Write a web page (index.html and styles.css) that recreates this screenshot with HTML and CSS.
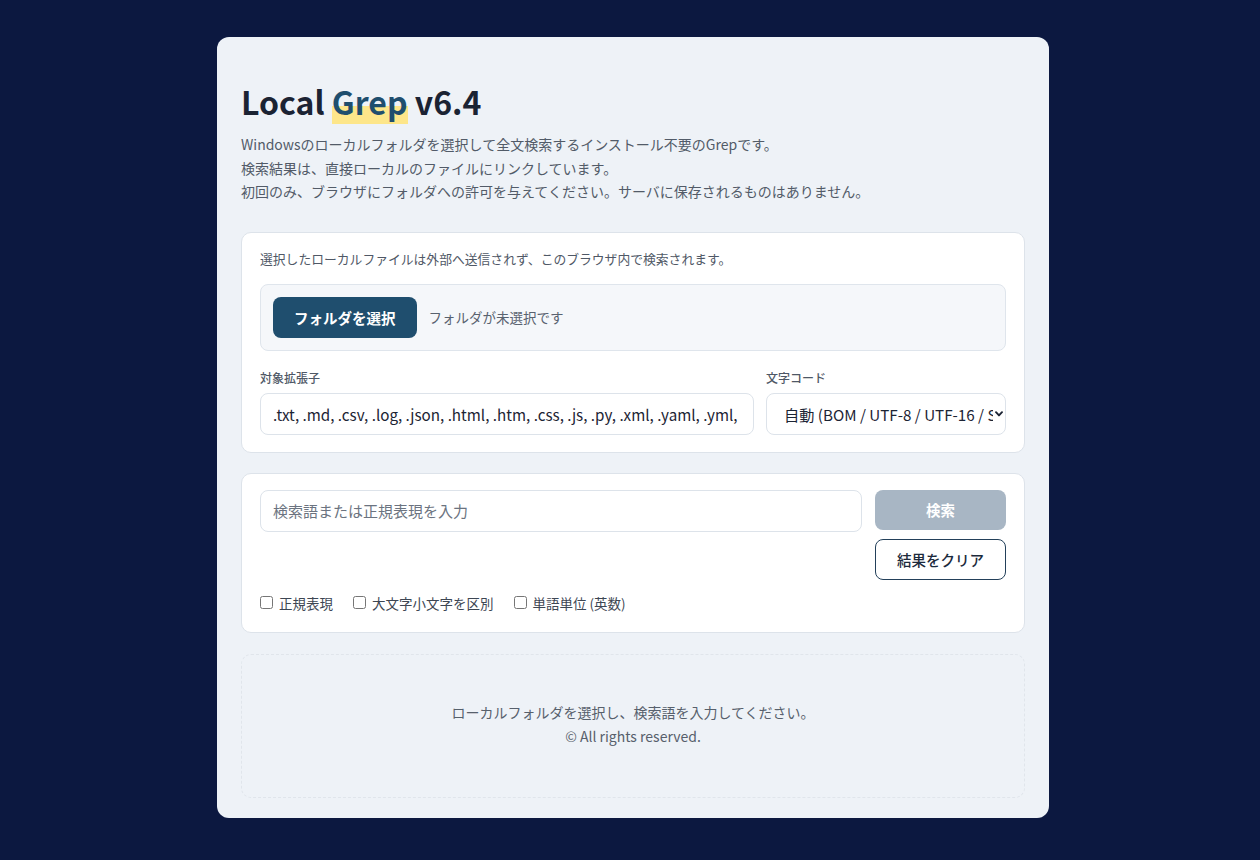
FILE: index.html
```html
<!DOCTYPE html>
<html lang="ja">
<head>
<meta charset="utf-8">
<title>Local Grep v6.4</title>
<link rel="stylesheet" href="styles.css">
</head>
<body>
<main class="card">
  <header class="intro">
    <h1 class="title">Local <span class="mark">Grep</span> v6.4</h1>
    <p class="lead">Windowsのローカルフォルダを選択して全文検索するインストール不要のGrepです。<br>検索結果は、直接ローカルのファイルにリンクしています。<br>初回のみ、ブラウザにフォルダへの許可を与えてください。サーバに保存されるものはありません。</p>
  </header>

  <section class="panel">
    <p class="note">選択したローカルファイルは外部へ送信されず、このブラウザ内で検索されます。</p>
    <div class="folder-box">
      <button class="btn-primary" type="button">フォルダを選択</button>
      <span class="folder-status">フォルダが未選択です</span>
    </div>
    <div class="field-row">
      <label class="field">
        <span class="field-label">対象拡張子</span>
        <input class="text-input" type="text" value=".txt, .md, .csv, .log, .json, .html, .htm, .css, .js, .py, .xml, .yaml, .yml, .ini, .bat">
      </label>
      <label class="field">
        <span class="field-label">文字コード</span>
        <span class="select-wrap">
          <select class="select-input">
            <option>自動 (BOM / UTF-8 / UTF-16 / Shift_JIS)</option>
          </select>
          <svg class="select-arrow" width="8" height="6" viewBox="0 0 8 6" aria-hidden="true"><path d="M1 1.2 L4 4.4 L7 1.2" fill="none" stroke="#1c2434" stroke-width="1.9" stroke-linecap="round" stroke-linejoin="round"/></svg>
        </span>
      </label>
    </div>
  </section>

  <section class="panel search-panel">
    <div class="search-row">
      <input class="text-input search-input" type="text" placeholder="検索語または正規表現を入力">
      <div class="search-buttons">
        <button class="btn-search" type="button" disabled>検索</button>
        <button class="btn-outline" type="button">結果をクリア</button>
      </div>
    </div>
    <div class="options">
      <label class="opt"><input type="checkbox"> 正規表現</label>
      <label class="opt"><input type="checkbox"> 大文字小文字を区別</label>
      <label class="opt"><input type="checkbox"> 単語単位 (英数)</label>
    </div>
  </section>

  <section class="results">
    <p class="results-msg">ローカルフォルダを選択し、検索語を入力してください。</p>
    <p class="results-msg">© All rights reserved.</p>
  </section>
</main>
</body>
</html>
```

FILE: styles.css
```css
* { box-sizing: border-box; }

html, body {
  margin: 0;
  padding: 0;
}

body {
  background: #0c1840;
  font-family: "Noto Sans CJK JP", "Noto Sans", sans-serif;
  color: #1c2434;
  padding: 37px 0 42px 6px;
}

.card {
  width: 832px;
  margin: 0 auto;
  background: #eef2f7;
  border-radius: 12px;
  padding: 45px 24px 20px;
}

.title {
  margin: 0;
  font-size: 32px;
  line-height: 38px;
  font-weight: 700;
  color: #1b2333;
  letter-spacing: 0;
}

.mark {
  color: #1f4e6e;
  background: linear-gradient(transparent 60%, #fde68a 60%);
}

.lead {
  margin: 13px 0 0;
  font-size: 14px;
  line-height: 23.5px;
  color: #525b68;
}

.panel {
  margin-top: 28px;
  background: #ffffff;
  border: 1px solid #dde3ea;
  border-radius: 10px;
  padding: 16px 18px 17px;
}

.note {
  margin: 0;
  font-size: 12.8px;
  line-height: 20px;
  color: #4f5866;
}

.folder-box {
  margin-top: 15px;
  display: flex;
  align-items: center;
  gap: 12px;
  background: #f5f7fa;
  border: 1px solid #dfe5ec;
  border-radius: 8px;
  padding: 12px;
}

.btn-primary {
  font-family: inherit;
  font-size: 14.5px;
  font-weight: 700;
  color: #ffffff;
  background: #1f4e6e;
  border: none;
  border-radius: 8px;
  height: 41px;
  padding: 0 21px;
}

.folder-status {
  font-size: 13.5px;
  color: #59626f;
}

.field-row {
  margin-top: 18px;
  display: grid;
  grid-template-columns: 1fr 240px;
  gap: 12px;
}

.field {
  display: flex;
  flex-direction: column;
  gap: 6px;
}

.field-label {
  font-size: 12px;
  line-height: 18px;
  font-weight: 500;
  color: #4f5866;
}

.text-input {
  font-family: inherit;
  font-size: 15.2px;
  color: #1c2434;
  height: 42px;
  border: 1px solid #dde3ea;
  border-radius: 8px;
  background: #ffffff;
  padding: 0 12px;
  width: 100%;
  outline: none;
}

.text-input::placeholder {
  color: #6b7380;
}

.select-wrap {
  position: relative;
  display: block;
}

.select-input {
  appearance: none;
  -webkit-appearance: none;
  display: block;
  font-family: inherit;
  font-size: 15.2px;
  color: #1c2434;
  height: 42px;
  border: 1px solid #dde3ea;
  border-radius: 8px;
  background: #ffffff;
  padding: 0 12px 0 17px;
  width: 100%;
  outline: none;
}

.select-arrow {
  position: absolute;
  right: 3px;
  top: 18px;
  pointer-events: none;
}

.search-panel {
  margin-top: 20px;
  padding: 16px 18px 19px;
}

.search-row {
  display: grid;
  grid-template-columns: 1fr 131px;
  gap: 13px;
}

.search-input {
  font-size: 15px;
}

.search-buttons {
  display: flex;
  flex-direction: column;
  gap: 9px;
}

.btn-search {
  font-family: inherit;
  font-size: 14.5px;
  font-weight: 700;
  color: #ffffff;
  background: #a8b6c4;
  border: none;
  border-radius: 8px;
  height: 40px;
}

.btn-outline {
  font-family: inherit;
  font-size: 14.5px;
  font-weight: 500;
  color: #1c2a3c;
  background: #ffffff;
  border: 1px solid #23405a;
  border-radius: 8px;
  height: 41px;
}

.options {
  margin-top: 13px;
  display: flex;
  gap: 20px;
}

.opt {
  display: flex;
  align-items: center;
  gap: 6px;
  font-size: 13.5px;
  line-height: 20px;
  color: #3d4653;
}

.opt input {
  margin: 0;
  width: 13px;
  height: 13px;
}

.results {
  margin-top: 21px;
  border: 1px dashed #e0e5eb;
  border-radius: 10px;
  padding: 45px 16px 49px;
  text-align: center;
}

.results-msg {
  margin: 0;
  font-size: 14px;
  line-height: 24px;
  color: #57606c;
}
```
